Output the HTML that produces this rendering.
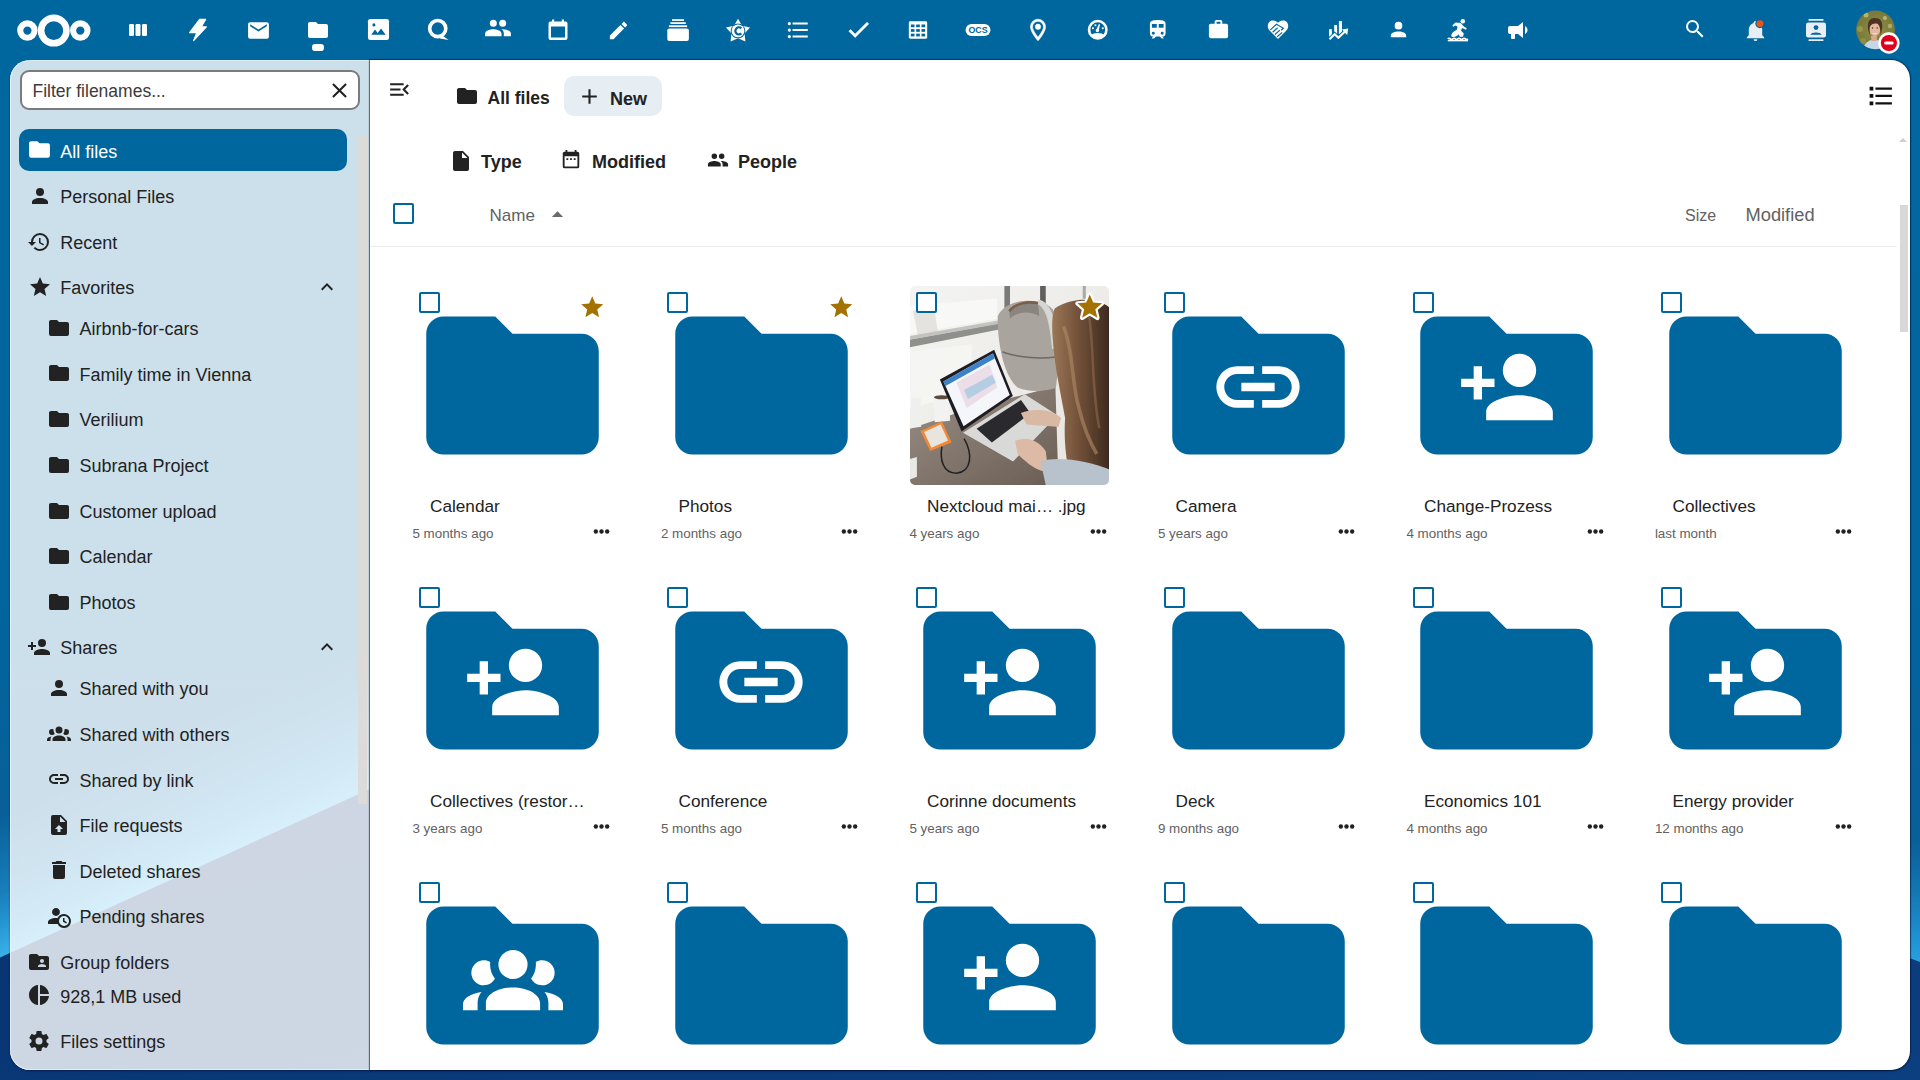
<!DOCTYPE html>
<html><head><meta charset="utf-8"><title>Files - Nextcloud</title>
<style>
html,body{margin:0;padding:0;}
body{width:1920px;height:1080px;overflow:hidden;position:relative;font-family:"Liberation Sans",sans-serif;background:#00679e;}
.t{position:absolute;white-space:nowrap;}
.ic{position:absolute;display:block;overflow:visible;}
.abs{position:absolute;}
</style></head><body>

<svg class="abs" style="left:0;top:0;width:1920px;height:1080px" viewBox="0 0 1920 1080">
<defs>
<linearGradient id="bgG" x1="0" y1="0" x2="0" y2="1">
<stop offset="0" stop-color="#00679e"/><stop offset="0.55" stop-color="#02659e"/><stop offset="0.8" stop-color="#0a5e98"/><stop offset="1" stop-color="#0a5e98"/>
</linearGradient>
<linearGradient id="bandL" gradientUnits="userSpaceOnUse" x1="131" y1="755.5" x2="185" y2="873.8">
<stop offset="0" stop-color="#2aa6e6" stop-opacity="0"/><stop offset="0.55" stop-color="#2aa6e6" stop-opacity="0.45"/><stop offset="1" stop-color="#3ab2ea" stop-opacity="1"/>
</linearGradient>
<linearGradient id="bandR" gradientUnits="userSpaceOnUse" x1="0" y1="840" x2="0" y2="962">
<stop offset="0" stop-color="#1d96d8" stop-opacity="0"/><stop offset="1" stop-color="#2aa4e4" stop-opacity="0.95"/>
</linearGradient>
<linearGradient id="dark" x1="0" y1="0" x2="1" y2="1">
<stop offset="0" stop-color="#06306c"/><stop offset="1" stop-color="#0c3f80"/>
</linearGradient>
</defs>
<rect width="1920" height="1080" fill="url(#bgG)"/>
<path d="M-50,981 L1100,458 L1050,340 L-100,860 Z" fill="url(#bandL)"/>
<path d="M1300,962 L1920,962 L1920,820 L1300,820 Z" fill="url(#bandR)"/>
<path d="M-10,962 L370,789 C700,640 1400,760 1920,962 L1920,1080 L-10,1080 Z" fill="url(#dark)"/>
</svg>

<svg class="abs" style="left:14px;top:10px;width:80px;height:40px" viewBox="14 10 80 40">
<circle cx="27.4" cy="30.6" r="7.2" fill="none" stroke="#fff" stroke-width="6.1"/>
<circle cx="53.8" cy="30.6" r="12.7" fill="none" stroke="#fff" stroke-width="6.6"/>
<circle cx="80.3" cy="30.6" r="7.2" fill="none" stroke="#fff" stroke-width="6.1"/>
</svg>
<svg class="ic" style="left:126.00px;top:18.00px;width:24px;height:24px" viewBox="0 0 24 24"><rect x="3" y="6" width="5" height="12" rx="1.2" fill="#fff"/><rect x="9.5" y="6" width="5" height="12" rx="1.2" fill="#fff"/><rect x="16" y="6" width="5" height="12" rx="1.2" fill="#fff"/></svg>
<svg class="abs" style="left:180px;top:12px;width:36px;height:36px" viewBox="180 12 36 36"><path fill="#fff" stroke="#fff" stroke-width="1.2" stroke-linejoin="round" d="M199.6,19.4 L205.6,19.4 L201.2,26.9 L206.4,26.9 L193.6,40.6 L196.8,32.6 L189.6,32.6 Z"/></svg>
<svg class="ic" style="left:245.50px;top:17.50px;width:25px;height:25px" viewBox="0 0 24 24"><path fill="#ffffff" d="M20,8L12,13L4,8V6L12,11L20,6M20,4H4C2.89,4 2,4.89 2,6V18A2,2 0 0,0 4,20H20A2,2 0 0,0 22,18V6C22,4.89 21.1,4 20,4Z"/></svg>
<svg class="ic" style="left:306.00px;top:17.80px;width:24px;height:24px" viewBox="0 0 24 24"><path fill="#ffffff" d="M10,4H4C2.89,4 2,4.89 2,6V18A2,2 0 0,0 4,20H20A2,2 0 0,0 22,18V8C22,6.89 21.1,6 20,6H12L10,4Z"/></svg>
<div class="abs" style="left:311.8px;top:44.4px;width:12.4px;height:6.2px;border-radius:3.1px;background:#fff"></div>
<svg class="ic" style="left:366.50px;top:18.30px;width:23px;height:23px" viewBox="0 0 24 24"><rect x="1" y="1" width="22" height="22" rx="2.5" fill="#fff"/><path fill="#00679e" d="M4.5,17.5 L8.3,12 L11.2,15.6 L14.6,11 L19.5,17.5 Z"/><circle cx="7.2" cy="7.2" r="1.6" fill="#00679e"/></svg>
<svg class="ic" style="left:426.50px;top:18.30px;width:23px;height:23px" viewBox="0 0 24 24"><circle cx="11.2" cy="11" r="8.4" fill="none" stroke="#fff" stroke-width="3.8"/><path fill="#fff" d="M15,17.5 L22.5,23 L13.5,21.5 Z"/></svg>
<svg class="ic" style="left:484.00px;top:14.00px;width:28px;height:28px" viewBox="0 0 24 24"><path fill="#ffffff" d="M16,13C15.71,13 15.38,13 15.03,13.05C16.19,13.89 17,15 17,16.5V19H23V16.5C23,14.17 18.33,13 16,13M8,13C5.67,13 1,14.17 1,16.5V19H15V16.5C15,14.17 10.33,13 8,13M8,11A3,3 0 0,0 11,8A3,3 0 0,0 8,5A3,3 0 0,0 5,8A3,3 0 0,0 8,11M16,11A3,3 0 0,0 19,8A3,3 0 0,0 16,5A3,3 0 0,0 13,8A3,3 0 0,0 16,11Z"/></svg>
<svg class="ic" style="left:546.00px;top:18.20px;width:24px;height:24px" viewBox="0 0 24 24"><path fill="#fff" d="M6,1.5H8.2V3.5H15.8V1.5H18V3.5H19.5A2,2 0 0,1 21.5,5.5V20A2,2 0 0,1 19.5,22H4.5A2,2 0 0,1 2.5,20V5.5A2,2 0 0,1 4.5,3.5H6Z M5,8.5V19.5H19V8.5Z"/></svg>
<svg class="ic" style="left:606.50px;top:18.50px;width:23px;height:23px" viewBox="0 0 24 24"><path fill="#ffffff" d="M20.71,7.04C21.1,6.65 21.1,6 20.71,5.63L18.37,3.29C18,2.9 17.35,2.9 16.96,3.29L15.12,5.12L18.87,8.87M3,17.25V21H6.75L17.81,9.93L14.06,6.18L3,17.25Z"/></svg>
<svg class="abs" style="left:660px;top:12px;width:40px;height:36px" viewBox="660 12 40 36"><rect x="667.3" y="28.4" width="21.6" height="12.5" rx="2" fill="#fff"/><rect x="668.9" y="25.3" width="18.2" height="1.8" fill="#fff"/><rect x="670.4" y="22.2" width="15.4" height="1.8" fill="#fff"/><rect x="672" y="19.2" width="12" height="1.7" fill="#fff"/></svg>
<svg class="abs" style="left:720px;top:12px;width:36px;height:36px" viewBox="720 12 36 36"><path fill="#fff" d="M738.00,18.70 L742.06,25.72 L749.98,27.41 L744.56,33.43 L745.41,41.49 L738.00,38.20 L730.59,41.49 L731.44,33.43 L726.02,27.41 L733.94,25.72 Z"/><circle cx="738" cy="30.9" r="7.4" fill="#00679e"/><circle cx="738" cy="30.9" r="6.4" fill="#fff"/><path fill="none" stroke="#00679e" stroke-width="2.2" d="M741.3,28.4 A3.5,3.5 0 1,0 741.3,33.4"/></svg>
<svg class="ic" style="left:785.00px;top:17.00px;width:26px;height:26px" viewBox="0 0 24 24"><path fill="#ffffff" d="M7,5H21V7H7V5M7,13V11H21V13H7M4,4.5A1.5,1.5 0 0,1 5.5,6A1.5,1.5 0 0,1 4,7.5A1.5,1.5 0 0,1 2.5,6A1.5,1.5 0 0,1 4,4.5M4,10.5A1.5,1.5 0 0,1 5.5,12A1.5,1.5 0 0,1 4,13.5A1.5,1.5 0 0,1 2.5,12A1.5,1.5 0 0,1 4,10.5M7,19V17H21V19H7M4,16.5A1.5,1.5 0 0,1 5.5,18A1.5,1.5 0 0,1 4,19.5A1.5,1.5 0 0,1 2.5,18A1.5,1.5 0 0,1 4,16.5Z"/></svg>
<svg class="ic" style="left:844.50px;top:15.50px;width:27px;height:27px" viewBox="0 0 24 24"><path fill="#fff" stroke="#fff" stroke-width="0.6" d="M21,7L9,19L3.5,13.5L4.91,12.09L9,16.17L19.59,5.59L21,7Z"/></svg>
<svg class="ic" style="left:907.00px;top:19.40px;width:22px;height:22px" viewBox="0 0 24 24"><rect x="2" y="2.5" width="20" height="19" rx="1.6" fill="#fff"/><g fill="#00679e"><rect x="4.2" y="6" width="4" height="3"/><rect x="10" y="6" width="4" height="3"/><rect x="15.8" y="6" width="4" height="3"/><rect x="4.2" y="11" width="4" height="3"/><rect x="10" y="11" width="4" height="3"/><rect x="15.8" y="11" width="4" height="3"/><rect x="4.2" y="16" width="4" height="3"/><rect x="10" y="16" width="4" height="3"/><rect x="15.8" y="16" width="4" height="3"/></g></svg>
<svg class="ic" style="left:965.00px;top:17.00px;width:26px;height:26px" viewBox="0 0 24 24"><rect x="0.5" y="6.5" width="23" height="11" rx="5.5" fill="#fff"/><text x="12" y="15.2" text-anchor="middle" font-family="Liberation Sans" font-weight="700" font-size="8.2" fill="#00679e">OCS</text></svg>
<svg class="ic" style="left:1025.00px;top:16.80px;width:26px;height:26px" viewBox="0 0 24 24"><path fill="#fff" stroke="#fff" stroke-width="0.5" d="M12,6.5A2.5,2.5 0 0,1 14.5,9A2.5,2.5 0 0,1 12,11.5A2.5,2.5 0 0,1 9.5,9A2.5,2.5 0 0,1 12,6.5M12,2A7,7 0 0,1 19,9C19,14.25 12,22 12,22C12,22 5,14.25 5,9A7,7 0 0,1 12,2M12,4A5,5 0 0,0 7,9C7,10 7,12 12,18.71C17,12 17,10 17,9A5,5 0 0,0 12,4Z"/></svg>
<svg class="ic" style="left:1087.25px;top:18.95px;width:21.5px;height:21.5px" viewBox="0 0 24 24"><circle cx="12" cy="12" r="9.7" fill="none" stroke="#fff" stroke-width="2.9"/><path fill="#fff" d="M4.6,18.2 C7.5,14.8 16.5,14.8 19.4,18.2 A9.7,9.7 0 0,1 4.6,18.2 Z"/><path fill="#fff" d="M10.2,12.3 L13.3,5.6 L14.6,6.1 L12.9,13.2 Z"/><circle cx="11.6" cy="12.9" r="1.9" fill="#fff"/><rect x="5.6" y="9.3" width="2" height="2" fill="#fff"/><rect x="8.4" y="6" width="2" height="2" fill="#fff"/><rect x="16.6" y="9.3" width="2" height="2" fill="#fff"/></svg>
<svg class="ic" style="left:1146.25px;top:17.85px;width:23.5px;height:23.5px" viewBox="0 0 24 24"><path fill="#ffffff" d="M12,2C8,2 4,2.5 4,6V15.5A3.5,3.5 0 0,0 7.5,19L6,20.5V21H8.23L10.23,19H14L16,21H18V20.5L16.5,19A3.5,3.5 0 0,0 20,15.5V6C20,2.5 16.42,2 12,2M7.5,17A1.5,1.5 0 0,1 6,15.5A1.5,1.5 0 0,1 7.5,14A1.5,1.5 0 0,1 9,15.5A1.5,1.5 0 0,1 7.5,17M11,10H6V6H11V10M13,10V6H18V10H13M16.5,17A1.5,1.5 0 0,1 15,15.5A1.5,1.5 0 0,1 16.5,14A1.5,1.5 0 0,1 18,15.5A1.5,1.5 0 0,1 16.5,17Z"/></svg>
<svg class="ic" style="left:1206.50px;top:18.30px;width:23px;height:23px" viewBox="0 0 24 24"><path fill="#ffffff" d="M10,2H14A2,2 0 0,1 16,4V6H20A2,2 0 0,1 22,8V19A2,2 0 0,1 20,21H4C2.89,21 2,20.1 2,19V8C2,6.89 2.89,6 4,6H8V4C8,2.89 8.89,2 10,2M14,6V4H10V6H14Z"/></svg>
<svg class="abs" style="left:1260px;top:12px;width:36px;height:36px" viewBox="1260 12 36 36"><path fill="#fff" d="M1278,39.1 L1269.8,30.8 C1266.5,27.5 1267.3,21.8 1271.8,20.6 C1274.5,19.9 1276.6,21 1278,22.8 C1279.4,21 1281.5,19.9 1284.2,20.6 C1288.7,21.8 1289.5,27.5 1286.2,30.8 Z"/><g fill="none" stroke="#00679e" stroke-width="1.15"><path d="M1270.4,29.8 L1276.4,24.3 L1283.4,28.3 L1281.2,30.2"/><path d="M1272.6,32.2 L1277.6,27.8"/><path d="M1274.9,34.5 L1279.9,30.1"/><path d="M1277.2,36.8 L1282.2,32.4"/></g></svg>
<svg class="abs" style="left:1320px;top:12px;width:36px;height:36px" viewBox="1320 12 36 36"><g fill="#fff"><rect x="1329" y="29.2" width="2.9" height="7.6"/><rect x="1334.2" y="25" width="2.9" height="9"/><rect x="1338.9" y="21.1" width="3.1" height="13"/></g><path fill="none" stroke="#00679e" stroke-width="4" d="M1329.5,39.2 L1334.7,34.3 L1338.4,37.8 L1345.5,31"/><path fill="none" stroke="#fff" stroke-width="2.1" d="M1329.5,39.2 L1334.7,34.3 L1338.4,37.8 L1345.5,31"/><path fill="#fff" d="M1348.2,28.6 L1341.8,29.6 L1347.2,35 Z"/></svg>
<svg class="ic" style="left:1386.50px;top:18.40px;width:23px;height:23px" viewBox="0 0 24 24"><path fill="#ffffff" d="M12,4A4,4 0 0,1 16,8A4,4 0 0,1 12,12A4,4 0 0,1 8,8A4,4 0 0,1 12,4M12,14C16.42,14 20,15.79 20,18V20H4V18C4,15.79 7.58,14 12,14Z"/></svg>
<svg class="abs" style="left:1440px;top:12px;width:36px;height:36px" viewBox="1440 12 36 36"><g fill="#fff"><circle cx="1462.8" cy="21.3" r="2.3"/><path d="M1452.3,25.4 L1455.5,22.4 L1460.8,22.9 L1463.8,26.4 L1466.8,28.2 L1466,29.7 L1462.2,28 L1460.9,30.4 L1463.8,33.4 L1463,36.8 L1459.8,36.8 L1458.6,33.9 L1456.3,31.6 L1457.6,26.8 L1455.4,25.4 L1453.4,26.8 Z"/><ellipse cx="1455.8" cy="33.4" rx="5.2" ry="2.7" transform="rotate(-35 1455.8 33.4)"/></g><path fill="none" stroke="#fff" stroke-width="1.7" d="M1447.8,38.9 q1.25,-1.3 2.5,0 t2.5,0 t2.5,0 t2.5,0 t2.5,0 t2.5,0 t2.5,0 t2.5,0"/><path fill="none" stroke="#fff" stroke-width="1.5" d="M1447.8,40.6 H1468"/></svg>
<svg class="ic" style="left:1506.00px;top:18.20px;width:24px;height:24px" viewBox="0 0 24 24"><path fill="#ffffff" d="M12,8H4A2,2 0 0,0 2,10V14A2,2 0 0,0 4,16H5V20A1,1 0 0,0 6,21H8A1,1 0 0,0 9,20V16H12L17,20V4L12,8M21.5,12C21.5,13.71 20.54,15.26 19,16V8C20.53,8.75 21.5,10.3 21.5,12Z"/></svg>
<svg class="ic" style="left:1683.20px;top:17.40px;width:24px;height:24px" viewBox="0 0 24 24"><path fill="#ffffff" d="M9.5,3A6.5,6.5 0 0,1 16,9.5C16,11.11 15.41,12.59 14.44,13.73L14.71,14H15.5L20.5,19L19,20.5L14,15.5V14.71L13.73,14.44C12.59,15.41 11.11,16 9.5,16A6.5,6.5 0 0,1 3,9.5A6.5,6.5 0 0,1 9.5,3M9.5,5C7,5 5,7 5,9.5C5,12 7,14 9.5,14C12,14 14,12 14,9.5C14,7 12,5 9.5,5Z"/></svg>
<svg class="ic" style="left:1744.00px;top:18.70px;width:23px;height:23px" viewBox="0 0 24 24"><path fill="#e8eef3" d="M21,19V20H3V19L5,17V11C5,7.9 7.03,5.17 10,4.29C10,4.19 10,4.1 10,4A2,2 0 0,1 12,2A2,2 0 0,1 14,4C14,4.1 14,4.19 14,4.29C16.97,5.17 19,7.9 19,11V17L21,19M14,21A2,2 0 0,1 12,23A2,2 0 0,1 10,21"/><circle cx="16.6" cy="4.8" r="4.8" fill="#00679e"/><circle cx="16.6" cy="4.8" r="3.6" fill="#e9541e"/></svg>
<svg class="ic" style="left:1804.00px;top:17.80px;width:24px;height:24px" viewBox="0 0 24 24"><rect x="4.5" y="1" width="15" height="1.8" rx="0.6" fill="#e8eef3"/><rect x="4.5" y="21.2" width="15" height="1.8" rx="0.6" fill="#e8eef3"/><rect x="2" y="4.5" width="20" height="15" rx="2.2" fill="#e8eef3"/><circle cx="12" cy="9.6" r="2.4" fill="#00679e"/><path fill="#00679e" d="M6.5,16.8 C7,13.8 17,13.8 17.5,16.8 Z"/></svg>
<svg class="abs" style="left:1855px;top:9px;width:48px;height:48px" viewBox="0 0 48 48">
<defs><clipPath id="av"><circle cx="20.5" cy="20.8" r="19.4"/></clipPath>
<radialGradient id="avbg" cx="0.45" cy="0.45" r="0.65"><stop offset="0" stop-color="#8f8f45"/><stop offset="0.7" stop-color="#75763a"/><stop offset="1" stop-color="#5a5f2c"/></radialGradient></defs>
<g clip-path="url(#av)">
<rect width="48" height="48" fill="url(#avbg)"/>
<circle cx="11" cy="6" r="2.5" fill="#c8c07c" opacity="0.8"/><circle cx="30" cy="9" r="2" fill="#d6cd8e" opacity="0.7"/><circle cx="35" cy="17" r="2.2" fill="#c9bf74" opacity="0.7"/><circle cx="5" cy="20" r="3" fill="#a2a04e" opacity="0.7"/><circle cx="8" cy="32" r="3" fill="#9b9a48" opacity="0.6"/><circle cx="33" cy="25" r="2" fill="#b8ae60" opacity="0.6"/>
<path d="M7,44 C8,35 13,31 19,30.5 C24,30.5 27,33 28,44 Z" fill="#c5d6e6"/>
<path d="M16,27 L22,27 L21.5,32 L16.5,32 Z" fill="#d8aa8c"/>
<ellipse cx="19.8" cy="19.5" rx="5.9" ry="7.6" fill="#e2b79b"/>
<path d="M13,20 C12,11 16,9 20,9 C25,9 28,12 27.2,19 C26.5,22 26,25 25.5,26 C25.5,21 25,16 22,14.5 C19,14 16,15 14.8,18 C14.5,21 14.8,24 15,26 C14,24 13.3,22 13,20 Z" fill="#4d3322"/>
<path d="M16.8,23.8 Q19.8,26.6 23,23.8 Q19.8,25 16.8,23.8 Z" fill="#fff"/>
<circle cx="17.5" cy="19" r="0.7" fill="#3a2a20"/><circle cx="22.2" cy="19" r="0.7" fill="#3a2a20"/>
</g>
<circle cx="33.9" cy="34" r="10.7" fill="#fff"/>
<circle cx="33.9" cy="34" r="8.1" fill="#e0001b"/>
<rect x="29.1" y="32.4" width="9.6" height="3.2" rx="1.6" fill="#fff"/>
</svg>
<div class="abs" style="left:10px;top:60px;width:360px;height:1010px;border-radius:20px 0 0 20px;background:rgba(255,255,255,0.8);box-shadow:inset 1px 0 0 rgba(255,255,255,0.55),inset 0 -1px 0 rgba(255,255,255,0.55),inset 0 1px 0 rgba(255,255,255,0.35),0 1px 2px rgba(0,10,50,0.55)"></div>
<div class="abs" style="left:358.2px;top:135px;width:9px;height:669px;background:#dcdbda"></div>
<div class="abs" style="left:19.5px;top:70px;width:340.5px;height:40px;box-sizing:border-box;border:2px solid #7b7b7b;border-radius:9px;background:#fff"></div>
<div class="t" style="left:32.50px;top:82.89px;font-size:17.5px;line-height:17.5px;color:#3b3b3b;font-weight:400;letter-spacing:0px;">Filter filenames...</div>
<svg class="ic" style="left:327.00px;top:77.50px;width:25px;height:25px" viewBox="0 0 24 24"><path fill="#222" d="M19,6.41L17.59,5L12,10.59L6.41,5L5,6.41L10.59,12L5,17.59L6.41,19L12,13.41L17.59,19L19,17.59L13.41,12L19,6.41Z"/></svg>
<div class="abs" style="left:19px;top:129.2px;width:328px;height:41.4px;border-radius:10px;background:#00679e"></div>
<svg class="ic" style="left:26.80px;top:137.00px;width:25px;height:25px" viewBox="0 0 24 24"><path fill="#fff" d="M10,4H4C2.89,4 2,4.89 2,6V18A2,2 0 0,0 4,20H20A2,2 0 0,0 22,18V8C22,6.89 21.1,6 20,6H12L10,4Z"/></svg>
<div class="t" style="left:60.30px;top:142.76px;font-size:18px;line-height:18px;color:#fff;font-weight:400;letter-spacing:0px;">All files</div>
<svg class="ic" style="left:27.50px;top:183.50px;width:24px;height:24px" viewBox="0 0 24 24"><path fill="#222222" d="M12,4A4,4 0 0,1 16,8A4,4 0 0,1 12,12A4,4 0 0,1 8,8A4,4 0 0,1 12,4M12,14C16.42,14 20,15.79 20,18V20H4V18C4,15.79 7.58,14 12,14Z"/></svg>
<div class="t" style="left:60.30px;top:187.76px;font-size:18px;line-height:18px;color:#222222;font-weight:400;letter-spacing:0px;">Personal Files</div>
<svg class="ic" style="left:27.30px;top:229.50px;width:24px;height:24px" viewBox="0 0 24 24"><path fill="#222222" d="M13.5,8H12V13L16.28,15.54L17,14.33L13.5,12.25V8M13,3A9,9 0 0,0 4,12H1L4.96,16.03L9,12H6A7,7 0 0,1 13,5A7,7 0 0,1 20,12A7,7 0 0,1 13,19C11.07,19 9.32,18.21 8.06,16.94L6.64,18.36C8.27,20 10.5,21 13,21A9,9 0 0,0 22,12A9,9 0 0,0 13,3"/></svg>
<div class="t" style="left:60.30px;top:233.76px;font-size:18px;line-height:18px;color:#222222;font-weight:400;letter-spacing:0px;">Recent</div>
<svg class="ic" style="left:27.50px;top:275.10px;width:24px;height:24px" viewBox="0 0 24 24"><path fill="#222222" d="M12,17.27L18.18,21L16.54,13.97L22,9.24L14.81,8.62L12,2L9.19,8.62L2,9.24L7.45,13.97L5.82,21L12,17.27Z"/></svg>
<div class="t" style="left:60.30px;top:279.36px;font-size:18px;line-height:18px;color:#222222;font-weight:400;letter-spacing:0px;">Favorites</div>
<svg class="ic" style="left:46.70px;top:316.00px;width:24px;height:24px" viewBox="0 0 24 24"><path fill="#222222" d="M10,4H4C2.89,4 2,4.89 2,6V18A2,2 0 0,0 4,20H20A2,2 0 0,0 22,18V8C22,6.89 21.1,6 20,6H12L10,4Z"/></svg>
<div class="t" style="left:79.50px;top:320.26px;font-size:18px;line-height:18px;color:#222222;font-weight:400;letter-spacing:0px;">Airbnb-for-cars</div>
<svg class="ic" style="left:46.70px;top:361.30px;width:24px;height:24px" viewBox="0 0 24 24"><path fill="#222222" d="M10,4H4C2.89,4 2,4.89 2,6V18A2,2 0 0,0 4,20H20A2,2 0 0,0 22,18V8C22,6.89 21.1,6 20,6H12L10,4Z"/></svg>
<div class="t" style="left:79.50px;top:365.56px;font-size:18px;line-height:18px;color:#222222;font-weight:400;letter-spacing:0px;">Family time in Vienna</div>
<svg class="ic" style="left:46.70px;top:407.00px;width:24px;height:24px" viewBox="0 0 24 24"><path fill="#222222" d="M10,4H4C2.89,4 2,4.89 2,6V18A2,2 0 0,0 4,20H20A2,2 0 0,0 22,18V8C22,6.89 21.1,6 20,6H12L10,4Z"/></svg>
<div class="t" style="left:79.50px;top:411.26px;font-size:18px;line-height:18px;color:#222222;font-weight:400;letter-spacing:0px;">Verilium</div>
<svg class="ic" style="left:46.70px;top:452.80px;width:24px;height:24px" viewBox="0 0 24 24"><path fill="#222222" d="M10,4H4C2.89,4 2,4.89 2,6V18A2,2 0 0,0 4,20H20A2,2 0 0,0 22,18V8C22,6.89 21.1,6 20,6H12L10,4Z"/></svg>
<div class="t" style="left:79.50px;top:457.06px;font-size:18px;line-height:18px;color:#222222;font-weight:400;letter-spacing:0px;">Subrana Project</div>
<svg class="ic" style="left:46.70px;top:498.50px;width:24px;height:24px" viewBox="0 0 24 24"><path fill="#222222" d="M10,4H4C2.89,4 2,4.89 2,6V18A2,2 0 0,0 4,20H20A2,2 0 0,0 22,18V8C22,6.89 21.1,6 20,6H12L10,4Z"/></svg>
<div class="t" style="left:79.50px;top:502.76px;font-size:18px;line-height:18px;color:#222222;font-weight:400;letter-spacing:0px;">Customer upload</div>
<svg class="ic" style="left:46.70px;top:543.80px;width:24px;height:24px" viewBox="0 0 24 24"><path fill="#222222" d="M10,4H4C2.89,4 2,4.89 2,6V18A2,2 0 0,0 4,20H20A2,2 0 0,0 22,18V8C22,6.89 21.1,6 20,6H12L10,4Z"/></svg>
<div class="t" style="left:79.50px;top:548.06px;font-size:18px;line-height:18px;color:#222222;font-weight:400;letter-spacing:0px;">Calendar</div>
<svg class="ic" style="left:46.70px;top:589.50px;width:24px;height:24px" viewBox="0 0 24 24"><path fill="#222222" d="M10,4H4C2.89,4 2,4.89 2,6V18A2,2 0 0,0 4,20H20A2,2 0 0,0 22,18V8C22,6.89 21.1,6 20,6H12L10,4Z"/></svg>
<div class="t" style="left:79.50px;top:593.76px;font-size:18px;line-height:18px;color:#222222;font-weight:400;letter-spacing:0px;">Photos</div>
<svg class="ic" style="left:27.30px;top:634.80px;width:24px;height:24px" viewBox="0 0 24 24"><path fill="#222222" d="M15,14C12.33,14 7,15.33 7,18V20H23V18C23,15.33 17.67,14 15,14M6,10V7H4V10H1V12H4V15H6V12H9V10M15,12A4,4 0 0,0 19,8A4,4 0 0,0 15,4A4,4 0 0,0 11,8A4,4 0 0,0 15,12Z"/></svg>
<div class="t" style="left:60.30px;top:639.06px;font-size:18px;line-height:18px;color:#222222;font-weight:400;letter-spacing:0px;">Shares</div>
<svg class="ic" style="left:46.70px;top:675.70px;width:24px;height:24px" viewBox="0 0 24 24"><path fill="#222222" d="M12,4A4,4 0 0,1 16,8A4,4 0 0,1 12,12A4,4 0 0,1 8,8A4,4 0 0,1 12,4M12,14C16.42,14 20,15.79 20,18V20H4V18C4,15.79 7.58,14 12,14Z"/></svg>
<div class="t" style="left:79.50px;top:679.96px;font-size:18px;line-height:18px;color:#222222;font-weight:400;letter-spacing:0px;">Shared with you</div>
<svg class="ic" style="left:46.70px;top:721.40px;width:24px;height:24px" viewBox="0 0 24 24"><path fill="#222222" d="M12,5.5A3.5,3.5 0 0,1 15.5,9A3.5,3.5 0 0,1 12,12.5A3.5,3.5 0 0,1 8.5,9A3.5,3.5 0 0,1 12,5.5M5,8C5.56,8 6.08,8.15 6.53,8.42C6.38,9.85 6.8,11.27 7.66,12.38C7.16,13.34 6.16,14 5,14A3,3 0 0,1 2,11A3,3 0 0,1 5,8M19,8A3,3 0 0,1 22,11A3,3 0 0,1 19,14C17.84,14 16.84,13.34 16.34,12.38C17.2,11.27 17.62,9.85 17.47,8.42C17.92,8.15 18.44,8 19,8M5.5,18.25C5.5,16.18 8.41,14.5 12,14.5C15.59,14.5 18.5,16.18 18.5,18.25V20H5.5V18.25M0,20V18.5C0,17.11 1.89,15.94 4.45,15.6C3.86,16.28 3.5,17.22 3.5,18.25V20H0M24,20H20.5V18.25C20.5,17.22 20.14,16.28 19.55,15.6C22.11,15.94 24,17.11 24,18.5V20Z"/></svg>
<div class="t" style="left:79.50px;top:725.66px;font-size:18px;line-height:18px;color:#222222;font-weight:400;letter-spacing:0px;">Shared with others</div>
<svg class="ic" style="left:46.70px;top:767.30px;width:24px;height:24px" viewBox="0 0 24 24"><path fill="#222222" d="M3.9,12C3.9,10.29 5.29,8.9 7,8.9H11V7H7A5,5 0 0,0 2,12A5,5 0 0,0 7,17H11V15.1H7C5.29,15.1 3.9,13.71 3.9,12M8,13H16V11H8V13M17,7H13V8.9H17C18.71,8.9 20.1,10.29 20.1,12C20.1,13.71 18.71,15.1 17,15.1H13V17H17A5,5 0 0,0 22,12A5,5 0 0,0 17,7Z"/></svg>
<div class="t" style="left:79.50px;top:771.56px;font-size:18px;line-height:18px;color:#222222;font-weight:400;letter-spacing:0px;">Shared by link</div>
<svg class="ic" style="left:46.70px;top:812.80px;width:24px;height:24px" viewBox="0 0 24 24"><path fill="#222222" d="M14,2H6A2,2 0 0,0 4,4V20A2,2 0 0,0 6,22H18A2,2 0 0,0 20,20V8L14,2M13.5,16V19H10.5V16H8L12,12L16,16H13.5M13,9V3.5L18.5,9H13Z"/></svg>
<div class="t" style="left:79.50px;top:817.06px;font-size:18px;line-height:18px;color:#222222;font-weight:400;letter-spacing:0px;">File requests</div>
<svg class="ic" style="left:46.70px;top:858.30px;width:24px;height:24px" viewBox="0 0 24 24"><path fill="#222222" d="M19,4H15.5L14.5,3H9.5L8.5,4H5V6H19M6,19A2,2 0 0,0 8,21H16A2,2 0 0,0 18,19V7H6V19Z"/></svg>
<div class="t" style="left:79.50px;top:862.56px;font-size:18px;line-height:18px;color:#222222;font-weight:400;letter-spacing:0px;">Deleted shares</div>
<svg class="ic" style="left:46.70px;top:904.20px;width:24px;height:24px" viewBox="0 0 24 24"><path fill="#222222" d="M10.63,14.1C12.23,10.58 16.38,9.03 19.9,10.63C23.42,12.23 24.97,16.38 23.37,19.9C22.24,22.4 19.75,24 17,24C14.3,24 11.83,22.44 10.67,20H1V18C1.06,16.86 1.84,15.93 3.34,15.18C4.84,14.43 6.72,14.04 9,14C9.57,14 10.11,14.05 10.63,14.1V14.1M9,4C10.12,4.03 11.06,4.42 11.81,5.17C12.56,5.92 12.93,6.86 12.93,8C12.93,9.14 12.56,10.08 11.81,10.83C11.06,11.58 10.12,11.95 9,11.95C7.88,11.95 6.94,11.58 6.19,10.83C5.44,10.08 5.07,9.14 5.07,8C5.07,6.86 5.44,5.92 6.19,5.17C6.94,4.42 7.88,4.03 9,4M17,22A5,5 0 0,0 22,17A5,5 0 0,0 17,12A5,5 0 0,0 12,17A5,5 0 0,0 17,22M16,14H17.5V16.82L19.94,18.23L19.19,19.53L16,17.69V14Z"/></svg>
<div class="t" style="left:79.50px;top:908.46px;font-size:18px;line-height:18px;color:#222222;font-weight:400;letter-spacing:0px;">Pending shares</div>
<svg class="ic" style="left:27.30px;top:949.70px;width:24px;height:24px" viewBox="0 0 24 24"><path fill="#222222" d="M19,17H11V16C11,14.67 13.67,14 15,14C16.33,14 19,14.67 19,16M15,9A2,2 0 0,1 17,11A2,2 0 0,1 15,13A2,2 0 0,1 13,11C13,9.89 13.9,9 15,9M20,6H12L10,4H4C2.89,4 2,4.89 2,6V18A2,2 0 0,0 4,20H20A2,2 0 0,0 22,18V8C22,6.89 21.1,6 20,6Z"/></svg>
<div class="t" style="left:60.30px;top:953.96px;font-size:18px;line-height:18px;color:#222222;font-weight:400;letter-spacing:0px;">Group folders</div>
<svg class="ic" style="left:27.30px;top:983.30px;width:24px;height:24px" viewBox="0 0 24 24"><path fill="#222222" d="M11,2V22C5.9,21.5 2,17.2 2,12C2,6.8 5.9,2.5 11,2M13,2V11H22C21.5,6.2 17.8,2.5 13,2M13,13V22C17.7,21.5 21.5,17.8 22,13H13Z"/></svg>
<div class="t" style="left:60.30px;top:987.56px;font-size:18px;line-height:18px;color:#222222;font-weight:400;letter-spacing:0px;">928,1 MB used</div>
<svg class="ic" style="left:27.30px;top:1028.50px;width:24px;height:24px" viewBox="0 0 24 24"><path fill="#222222" d="M12,15.5A3.5,3.5 0 0,1 8.5,12A3.5,3.5 0 0,1 12,8.5A3.5,3.5 0 0,1 15.5,12A3.5,3.5 0 0,1 12,15.5M19.43,12.97C19.47,12.65 19.5,12.33 19.5,12C19.5,11.67 19.47,11.34 19.43,11L21.54,9.37C21.73,9.22 21.78,8.95 21.66,8.73L19.66,5.27C19.54,5.05 19.27,4.96 19.05,5.05L16.56,6.05C16.04,5.66 15.5,5.32 14.87,5.07L14.5,2.42C14.46,2.18 14.25,2 14,2H10C9.75,2 9.54,2.18 9.5,2.42L9.13,5.07C8.5,5.32 7.96,5.66 7.44,6.05L4.95,5.05C4.73,4.96 4.46,5.05 4.34,5.27L2.34,8.73C2.21,8.95 2.27,9.22 2.46,9.37L4.57,11C4.53,11.34 4.5,11.67 4.5,12C4.5,12.33 4.53,12.65 4.57,12.97L2.46,14.63C2.27,14.78 2.21,15.05 2.34,15.27L4.34,18.73C4.46,18.95 4.73,19.03 4.95,18.95L7.44,17.94C7.96,18.34 8.5,18.68 9.13,18.93L9.5,21.58C9.54,21.82 9.75,22 10,22H14C14.25,22 14.46,21.82 14.5,21.58L14.87,18.93C15.5,18.67 16.04,18.34 16.56,17.94L19.05,18.95C19.27,19.03 19.54,18.95 19.66,18.73L21.66,15.27C21.78,15.05 21.73,14.78 21.54,14.63L19.43,12.97Z"/></svg>
<div class="t" style="left:60.30px;top:1032.76px;font-size:18px;line-height:18px;color:#222222;font-weight:400;letter-spacing:0px;">Files settings</div>
<svg class="ic" style="left:314.50px;top:275.40px;width:24px;height:24px" viewBox="0 0 24 24"><path fill="#222222" d="M7.41,15.41L12,10.83L16.59,15.41L18,14L12,8L6,14L7.41,15.41Z"/></svg>
<svg class="ic" style="left:314.50px;top:635.00px;width:24px;height:24px" viewBox="0 0 24 24"><path fill="#222222" d="M7.41,15.41L12,10.83L16.59,15.41L18,14L12,8L6,14L7.41,15.41Z"/></svg>
<div class="abs" style="left:370px;top:60px;width:1540px;height:1010px;border-radius:0 19px 19px 0;background:#fff;box-shadow:0 1px 2px rgba(0,10,50,0.55),0 0 1px 0.6px rgba(0,25,70,0.55)"></div>
<svg class="ic" style="left:386.80px;top:77.40px;width:25px;height:25px" viewBox="0 0 24 24"><path fill="#222" d="M3,6H16V8H3Z M3,11H13V13H3Z M3,16H16V18H3Z M21,15.6L19.6,17L14.6,12L19.6,7L21,8.4L17.4,12Z"/></svg>
<svg class="ic" style="left:454.70px;top:83.90px;width:24px;height:24px" viewBox="0 0 24 24"><path fill="#222" d="M10,4H4C2.89,4 2,4.89 2,6V18A2,2 0 0,0 4,20H20A2,2 0 0,0 22,18V8C22,6.89 21.1,6 20,6H12L10,4Z"/></svg>
<div class="t" style="left:487.50px;top:89.99px;font-size:17.5px;line-height:17.5px;color:#222;font-weight:700;letter-spacing:0px;">All files</div>
<div class="abs" style="left:564.4px;top:75.8px;width:97.6px;height:40.2px;border-radius:10px;background:#e6eef4"></div>
<svg class="ic" style="left:576.50px;top:83.50px;width:25px;height:25px" viewBox="0 0 24 24"><path fill="#222" d="M19,13H13V19H11V13H5V11H11V5H13V11H19V13Z"/></svg>
<div class="t" style="left:610.00px;top:89.56px;font-size:18px;line-height:18px;color:#222;font-weight:700;letter-spacing:0px;">New</div>
<svg class="ic" style="left:1867.55px;top:83.85px;width:25.5px;height:25.5px" viewBox="0 0 24 24"><path fill="#111" d="M1.5,2.5H5V6H1.5Z M1.5,9.5H5V13H1.5Z M1.5,16.5H5V20H1.5Z M7,3.2H22.5V5.4H7Z M7,10.1H22.5V12.3H7Z M7,17.1H22.5V19.3H7Z"/></svg>
<svg class="ic" style="left:448.80px;top:148.80px;width:24px;height:24px" viewBox="0 0 24 24"><path fill="#222" d="M13,9V3.5L18.5,9M6,2C4.89,2 4,2.89 4,4V20A2,2 0 0,0 6,22H18A2,2 0 0,0 20,20V8L14,2H6Z"/></svg>
<div class="t" style="left:481.00px;top:153.16px;font-size:18px;line-height:18px;color:#222;font-weight:700;letter-spacing:0px;">Type</div>
<svg class="ic" style="left:560.00px;top:148.80px;width:22px;height:22px" viewBox="0 0 24 24"><path fill="#222" d="M19,19H5V8H19M16,1V3H8V1H6V3H5C3.89,3 3,3.89 3,5V19A2,2 0 0,0 5,21H19A2,2 0 0,0 21,19V5C21,3.89 20.1,3 19,3H18V1M7,10H9V12H7M11,10H13V12H11M15,10H17V12H15Z"/></svg>
<div class="t" style="left:592.00px;top:153.16px;font-size:18px;line-height:18px;color:#222;font-weight:700;letter-spacing:0px;">Modified</div>
<svg class="ic" style="left:706.50px;top:148.50px;width:22px;height:22px" viewBox="0 0 24 24"><path fill="#222" d="M16,13C15.71,13 15.38,13 15.03,13.05C16.19,13.89 17,15 17,16.5V19H23V16.5C23,14.17 18.33,13 16,13M8,13C5.67,13 1,14.17 1,16.5V19H15V16.5C15,14.17 10.33,13 8,13M8,11A3,3 0 0,0 11,8A3,3 0 0,0 8,5A3,3 0 0,0 5,8A3,3 0 0,0 8,11M16,11A3,3 0 0,0 19,8A3,3 0 0,0 16,5A3,3 0 0,0 13,8A3,3 0 0,0 16,11Z"/></svg>
<div class="t" style="left:738.00px;top:153.16px;font-size:18px;line-height:18px;color:#222;font-weight:700;letter-spacing:0px;">People</div>
<div class="abs" style="left:392.5px;top:203.4px;width:21.5px;height:20.2px;box-sizing:border-box;border:2.5px solid #00679e;border-radius:2px"></div>
<div class="t" style="left:489.50px;top:206.71px;font-size:17px;line-height:17px;color:#626262;font-weight:400;letter-spacing:0px;">Name</div>
<svg class="ic" style="left:544.30px;top:199.70px;width:27px;height:27px" viewBox="0 0 24 24"><path fill="#6b6b6b" d="M7,15L12,10L17,15H7Z"/></svg>
<div class="t" style="left:1685.00px;top:207.56px;font-size:16px;line-height:16px;color:#626262;font-weight:400;letter-spacing:0px;">Size</div>
<div class="t" style="left:1745.50px;top:205.61px;font-size:18.3px;line-height:18.3px;color:#626262;font-weight:400;letter-spacing:0px;">Modified</div>
<div class="abs" style="left:370px;top:245.5px;width:1527px;height:1.2px;background:#ededed"></div>
<div class="abs" style="left:1900px;top:205px;width:8px;height:127px;background:#d8d8d8"></div>
<svg class="abs" style="left:1895px;top:134px;width:16px;height:10px" viewBox="0 0 16 10"><path d="M4,8 L8,4 L12,8 Z" fill="#cfcfcf"/></svg>
<svg class="abs" style="left:409.00px;top:282.00px;width:207px;height:207px" viewBox="0 0 24 24"><path fill="#00679e" d="M10,4H4C2.89,4 2,4.89 2,6V18A2,2 0 0,0 4,20H20A2,2 0 0,0 22,18V8C22,6.89 21.1,6 20,6H12L10,4Z"/></svg>
<div class="abs" style="left:418.80px;top:291.80px;width:21px;height:21px;box-sizing:border-box;border:2.5px solid #00679e;border-radius:2px"></div>
<svg class="ic" style="left:579.05px;top:294.05px;width:26.5px;height:26.5px" viewBox="0 0 24 24"><path fill="#a37200" d="M12,17.27L18.18,21L16.54,13.97L22,9.24L14.81,8.62L12,2L9.19,8.62L2,9.24L7.45,13.97L5.82,21L12,17.27Z"/></svg>
<div class="t" style="left:430.00px;top:498.44px;font-size:17.2px;line-height:17.2px;color:#222222;font-weight:400;letter-spacing:0px;">Calendar</div>
<div class="t" style="left:412.40px;top:527.16px;font-size:13.4px;line-height:13.4px;color:#626262;font-weight:400;letter-spacing:0px;">5 months ago</div>
<svg class="ic" style="left:592.50px;top:523.10px;width:17px;height:17px" viewBox="0 0 24 24"><circle cx="4" cy="12" r="3.1" fill="#222"/><circle cx="12" cy="12" r="3.1" fill="#222"/><circle cx="20" cy="12" r="3.1" fill="#222"/></svg>
<svg class="abs" style="left:657.50px;top:282.00px;width:207px;height:207px" viewBox="0 0 24 24"><path fill="#00679e" d="M10,4H4C2.89,4 2,4.89 2,6V18A2,2 0 0,0 4,20H20A2,2 0 0,0 22,18V8C22,6.89 21.1,6 20,6H12L10,4Z"/></svg>
<div class="abs" style="left:667.30px;top:291.80px;width:21px;height:21px;box-sizing:border-box;border:2.5px solid #00679e;border-radius:2px"></div>
<svg class="ic" style="left:827.55px;top:294.05px;width:26.5px;height:26.5px" viewBox="0 0 24 24"><path fill="#a37200" d="M12,17.27L18.18,21L16.54,13.97L22,9.24L14.81,8.62L12,2L9.19,8.62L2,9.24L7.45,13.97L5.82,21L12,17.27Z"/></svg>
<div class="t" style="left:678.50px;top:498.44px;font-size:17.2px;line-height:17.2px;color:#222222;font-weight:400;letter-spacing:0px;">Photos</div>
<div class="t" style="left:660.90px;top:527.16px;font-size:13.4px;line-height:13.4px;color:#626262;font-weight:400;letter-spacing:0px;">2 months ago</div>
<svg class="ic" style="left:841.00px;top:523.10px;width:17px;height:17px" viewBox="0 0 24 24"><circle cx="4" cy="12" r="3.1" fill="#222"/><circle cx="12" cy="12" r="3.1" fill="#222"/><circle cx="20" cy="12" r="3.1" fill="#222"/></svg>
<svg class="abs" style="left:909.80px;top:285.70px;width:199px;height:199px;border-radius:5px;overflow:hidden" viewBox="0 0 199 199"><defs><filter id="phBlur" x="-5%" y="-5%" width="110%" height="110%"><feGaussianBlur stdDeviation="0.7"/></filter>
<linearGradient id="phWin" x1="0" y1="0" x2="1" y2="1"><stop offset="0" stop-color="#f4f4f2"/><stop offset="1" stop-color="#e6e4e0"/></linearGradient>
<linearGradient id="phTab" x1="0" y1="0" x2="1" y2="1"><stop offset="0" stop-color="#9a8f85"/><stop offset="1" stop-color="#6a5d54"/></linearGradient>
<linearGradient id="phHair" x1="0" y1="0" x2="1" y2="0"><stop offset="0" stop-color="#9a7656"/><stop offset="0.45" stop-color="#74523a"/><stop offset="1" stop-color="#3e2a1e"/></linearGradient>
</defs>
<g filter="url(#phBlur)"><g transform="scale(0.25513) translate(-58,-42)">
<rect x="58" y="42" width="780" height="780" fill="url(#phWin)"/>
<path d="M58,120 L400,90 L400,170 L58,230 Z" fill="#f8f8f6"/>
<path d="M70,140 L150,120 L170,230 L90,240 Z" fill="#d8d6d2" opacity="0.6"/>
<path d="M58,252 L409,188 L412,212 L58,282 Z" fill="#8f8f8c"/>
<path d="M58,238 L409,176 L409,190 L58,253 Z" fill="#c2c2be"/>
<rect x="428" y="42" width="22" height="150" fill="#7a7a78"/>
<rect x="568" y="42" width="22" height="90" fill="#5e5e5c"/>
<rect x="735" y="42" width="12" height="50" fill="#a8a8a6"/>
<path d="M58,300 L300,270 L300,460 L58,520 Z" fill="#f6f6f4" opacity="0.8"/>
<path d="M58,602 L300,520 L628,436 L640,822 L58,822 Z" fill="url(#phTab)"/>
<path d="M62,481 L100,478 L102,594 L62,600 Z" fill="#efefed"/>
<path d="M150,475 L212,470 L215,570 L155,576 Z" fill="#f2f2f0"/>
<ellipse cx="182" cy="478" rx="30" ry="8" fill="#5a4a3e"/>
<path d="M58,720 L85,712 L85,790 L58,800 Z" fill="#e8e8e6"/>
<path d="M402,160 C420,120 470,100 520,100 C580,100 620,120 630,160 C650,250 640,360 630,440 C600,455 520,460 480,440 C430,400 400,280 402,160 Z" fill="#a9a49d"/>
<path d="M447,140 C480,100 540,95 561,120 L565,160 C530,140 480,140 450,170 Z" fill="#8a857e"/>
<path d="M447,141 C470,110 520,100 561,110" fill="none" stroke="#7a5e48" stroke-width="10"/>
<path d="M560,95 C600,100 630,150 640,280 L615,290 C605,180 590,130 560,115 Z" fill="#d6d6d2"/>
<path d="M420,300 C470,320 560,330 630,320" fill="none" stroke="#6e6a64" stroke-width="6"/>
<path d="M175,408 L388,292 L461,473 L260,612 Z" fill="#1f1f22"/>
<path d="M189,416 L383,307 L449,469 L268,592 Z" fill="#f4f6fa"/>
<path d="M189,416 L383,307 L390,326 L197,434 Z" fill="#3c82c8"/>
<path d="M240,420 L370,350 L400,440 L280,520 Z" fill="#e6cad8" opacity="0.55"/>
<path d="M270,450 L380,390 L395,420 L285,485 Z" fill="#9ec6e0" opacity="0.7"/>
<path d="M266,617 L508,466 L636,549 L462,730 Z" fill="#d9d9d7"/>
<path d="M319,602 L493,489 L530,541 L379,655 Z" fill="#2c2c2e"/>
<path d="M625,130 C700,80 800,90 838,125 L838,822 L700,822 C670,760 660,640 666,560 C650,470 630,380 622,300 C615,220 610,170 625,130 Z" fill="url(#phHair)"/>
<path d="M660,200 C700,300 690,420 720,520 C740,600 760,650 790,700" fill="none" stroke="#b08a66" stroke-width="14" opacity="0.6"/>
<path d="M760,160 C780,300 770,450 800,600" fill="none" stroke="#8e6a4c" stroke-width="10" opacity="0.6"/>
<path d="M493,540 C540,520 620,525 650,560 L640,595 C600,590 560,590 515,585 Z" fill="#d9b8a4"/>
<path d="M470,650 C500,630 560,640 590,690 L600,770 C560,770 520,740 480,700 Z" fill="#dcbaa6"/>
<path d="M570,730 C640,705 760,730 838,760 L838,822 L590,822 Z" fill="#b8c2cc"/>
<path d="M99,610 L183,572 L221,655 L137,689 Z" fill="#f08a38"/>
<path d="M113,614 L178,585 L207,648 L142,676 Z" fill="#e8e4de"/>
<path d="M183,672 C175,720 185,775 240,776 C300,770 305,700 270,640" fill="none" stroke="#222" stroke-width="6"/>
</g></g>
</svg>
<div class="abs" style="left:915.90px;top:291.60px;width:21px;height:21px;box-sizing:border-box;border:2.5px solid #00679e;border-radius:2px;background:#fff"></div>
<svg class="ic" style="left:1074.65px;top:292.15px;width:29.5px;height:29.5px" viewBox="0 0 24 24"><path fill="#fff" stroke="#fff" stroke-width="3.6" stroke-linejoin="round" d="M12,17.27L18.18,21L16.54,13.97L22,9.24L14.81,8.62L12,2L9.19,8.62L2,9.24L7.45,13.97L5.82,21L12,17.27Z"/><path fill="#a37200" d="M12,17.27L18.18,21L16.54,13.97L22,9.24L14.81,8.62L12,2L9.19,8.62L2,9.24L7.45,13.97L5.82,21L12,17.27Z"/></svg>
<div class="t" style="left:927.00px;top:498.44px;font-size:17.2px;line-height:17.2px;color:#222222;font-weight:400;letter-spacing:0px;">Nextcloud mai… .jpg</div>
<div class="t" style="left:909.40px;top:527.16px;font-size:13.4px;line-height:13.4px;color:#626262;font-weight:400;letter-spacing:0px;">4 years ago</div>
<svg class="ic" style="left:1089.50px;top:523.10px;width:17px;height:17px" viewBox="0 0 24 24"><circle cx="4" cy="12" r="3.1" fill="#222"/><circle cx="12" cy="12" r="3.1" fill="#222"/><circle cx="20" cy="12" r="3.1" fill="#222"/></svg>
<svg class="abs" style="left:1154.50px;top:282.00px;width:207px;height:207px" viewBox="0 0 24 24"><path fill="#00679e" d="M10,4H4C2.89,4 2,4.89 2,6V18A2,2 0 0,0 4,20H20A2,2 0 0,0 22,18V8C22,6.89 21.1,6 20,6H12L10,4Z"/></svg>
<svg class="abs" style="left:1208.00px;top:336.50px;width:100px;height:100px" viewBox="0 0 24 24"><path fill="#fff" d="M3.9,12C3.9,10.29 5.29,8.9 7,8.9H11V7H7A5,5 0 0,0 2,12A5,5 0 0,0 7,17H11V15.1H7C5.29,15.1 3.9,13.71 3.9,12M8,13H16V11H8V13M17,7H13V8.9H17C18.71,8.9 20.1,10.29 20.1,12C20.1,13.71 18.71,15.1 17,15.1H13V17H17A5,5 0 0,0 22,12A5,5 0 0,0 17,7Z"/></svg>
<div class="abs" style="left:1164.30px;top:291.80px;width:21px;height:21px;box-sizing:border-box;border:2.5px solid #00679e;border-radius:2px"></div>
<div class="t" style="left:1175.50px;top:498.44px;font-size:17.2px;line-height:17.2px;color:#222222;font-weight:400;letter-spacing:0px;">Camera</div>
<div class="t" style="left:1157.90px;top:527.16px;font-size:13.4px;line-height:13.4px;color:#626262;font-weight:400;letter-spacing:0px;">5 years ago</div>
<svg class="ic" style="left:1338.00px;top:523.10px;width:17px;height:17px" viewBox="0 0 24 24"><circle cx="4" cy="12" r="3.1" fill="#222"/><circle cx="12" cy="12" r="3.1" fill="#222"/><circle cx="20" cy="12" r="3.1" fill="#222"/></svg>
<svg class="abs" style="left:1403.00px;top:282.00px;width:207px;height:207px" viewBox="0 0 24 24"><path fill="#00679e" d="M10,4H4C2.89,4 2,4.89 2,6V18A2,2 0 0,0 4,20H20A2,2 0 0,0 22,18V8C22,6.89 21.1,6 20,6H12L10,4Z"/></svg>
<svg class="abs" style="left:1456.50px;top:336.50px;width:100px;height:100px" viewBox="0 0 24 24"><path fill="#fff" d="M15,14C12.33,14 7,15.33 7,18V20H23V18C23,15.33 17.67,14 15,14M6,10V7H4V10H1V12H4V15H6V12H9V10M15,12A4,4 0 0,0 19,8A4,4 0 0,0 15,4A4,4 0 0,0 11,8A4,4 0 0,0 15,12Z"/></svg>
<div class="abs" style="left:1412.80px;top:291.80px;width:21px;height:21px;box-sizing:border-box;border:2.5px solid #00679e;border-radius:2px"></div>
<div class="t" style="left:1424.00px;top:498.44px;font-size:17.2px;line-height:17.2px;color:#222222;font-weight:400;letter-spacing:0px;">Change-Prozess</div>
<div class="t" style="left:1406.40px;top:527.16px;font-size:13.4px;line-height:13.4px;color:#626262;font-weight:400;letter-spacing:0px;">4 months ago</div>
<svg class="ic" style="left:1586.50px;top:523.10px;width:17px;height:17px" viewBox="0 0 24 24"><circle cx="4" cy="12" r="3.1" fill="#222"/><circle cx="12" cy="12" r="3.1" fill="#222"/><circle cx="20" cy="12" r="3.1" fill="#222"/></svg>
<svg class="abs" style="left:1651.50px;top:282.00px;width:207px;height:207px" viewBox="0 0 24 24"><path fill="#00679e" d="M10,4H4C2.89,4 2,4.89 2,6V18A2,2 0 0,0 4,20H20A2,2 0 0,0 22,18V8C22,6.89 21.1,6 20,6H12L10,4Z"/></svg>
<div class="abs" style="left:1661.30px;top:291.80px;width:21px;height:21px;box-sizing:border-box;border:2.5px solid #00679e;border-radius:2px"></div>
<div class="t" style="left:1672.50px;top:498.44px;font-size:17.2px;line-height:17.2px;color:#222222;font-weight:400;letter-spacing:0px;">Collectives</div>
<div class="t" style="left:1654.90px;top:527.16px;font-size:13.4px;line-height:13.4px;color:#626262;font-weight:400;letter-spacing:0px;">last month</div>
<svg class="ic" style="left:1835.00px;top:523.10px;width:17px;height:17px" viewBox="0 0 24 24"><circle cx="4" cy="12" r="3.1" fill="#222"/><circle cx="12" cy="12" r="3.1" fill="#222"/><circle cx="20" cy="12" r="3.1" fill="#222"/></svg>
<svg class="abs" style="left:409.00px;top:577.00px;width:207px;height:207px" viewBox="0 0 24 24"><path fill="#00679e" d="M10,4H4C2.89,4 2,4.89 2,6V18A2,2 0 0,0 4,20H20A2,2 0 0,0 22,18V8C22,6.89 21.1,6 20,6H12L10,4Z"/></svg>
<svg class="abs" style="left:462.50px;top:631.50px;width:100px;height:100px" viewBox="0 0 24 24"><path fill="#fff" d="M15,14C12.33,14 7,15.33 7,18V20H23V18C23,15.33 17.67,14 15,14M6,10V7H4V10H1V12H4V15H6V12H9V10M15,12A4,4 0 0,0 19,8A4,4 0 0,0 15,4A4,4 0 0,0 11,8A4,4 0 0,0 15,12Z"/></svg>
<div class="abs" style="left:418.80px;top:586.80px;width:21px;height:21px;box-sizing:border-box;border:2.5px solid #00679e;border-radius:2px"></div>
<div class="t" style="left:430.00px;top:793.44px;font-size:17.2px;line-height:17.2px;color:#222222;font-weight:400;letter-spacing:0px;">Collectives (restor…</div>
<div class="t" style="left:412.40px;top:822.16px;font-size:13.4px;line-height:13.4px;color:#626262;font-weight:400;letter-spacing:0px;">3 years ago</div>
<svg class="ic" style="left:592.50px;top:818.10px;width:17px;height:17px" viewBox="0 0 24 24"><circle cx="4" cy="12" r="3.1" fill="#222"/><circle cx="12" cy="12" r="3.1" fill="#222"/><circle cx="20" cy="12" r="3.1" fill="#222"/></svg>
<svg class="abs" style="left:657.50px;top:577.00px;width:207px;height:207px" viewBox="0 0 24 24"><path fill="#00679e" d="M10,4H4C2.89,4 2,4.89 2,6V18A2,2 0 0,0 4,20H20A2,2 0 0,0 22,18V8C22,6.89 21.1,6 20,6H12L10,4Z"/></svg>
<svg class="abs" style="left:711.00px;top:631.50px;width:100px;height:100px" viewBox="0 0 24 24"><path fill="#fff" d="M3.9,12C3.9,10.29 5.29,8.9 7,8.9H11V7H7A5,5 0 0,0 2,12A5,5 0 0,0 7,17H11V15.1H7C5.29,15.1 3.9,13.71 3.9,12M8,13H16V11H8V13M17,7H13V8.9H17C18.71,8.9 20.1,10.29 20.1,12C20.1,13.71 18.71,15.1 17,15.1H13V17H17A5,5 0 0,0 22,12A5,5 0 0,0 17,7Z"/></svg>
<div class="abs" style="left:667.30px;top:586.80px;width:21px;height:21px;box-sizing:border-box;border:2.5px solid #00679e;border-radius:2px"></div>
<div class="t" style="left:678.50px;top:793.44px;font-size:17.2px;line-height:17.2px;color:#222222;font-weight:400;letter-spacing:0px;">Conference</div>
<div class="t" style="left:660.90px;top:822.16px;font-size:13.4px;line-height:13.4px;color:#626262;font-weight:400;letter-spacing:0px;">5 months ago</div>
<svg class="ic" style="left:841.00px;top:818.10px;width:17px;height:17px" viewBox="0 0 24 24"><circle cx="4" cy="12" r="3.1" fill="#222"/><circle cx="12" cy="12" r="3.1" fill="#222"/><circle cx="20" cy="12" r="3.1" fill="#222"/></svg>
<svg class="abs" style="left:906.00px;top:577.00px;width:207px;height:207px" viewBox="0 0 24 24"><path fill="#00679e" d="M10,4H4C2.89,4 2,4.89 2,6V18A2,2 0 0,0 4,20H20A2,2 0 0,0 22,18V8C22,6.89 21.1,6 20,6H12L10,4Z"/></svg>
<svg class="abs" style="left:959.50px;top:631.50px;width:100px;height:100px" viewBox="0 0 24 24"><path fill="#fff" d="M15,14C12.33,14 7,15.33 7,18V20H23V18C23,15.33 17.67,14 15,14M6,10V7H4V10H1V12H4V15H6V12H9V10M15,12A4,4 0 0,0 19,8A4,4 0 0,0 15,4A4,4 0 0,0 11,8A4,4 0 0,0 15,12Z"/></svg>
<div class="abs" style="left:915.80px;top:586.80px;width:21px;height:21px;box-sizing:border-box;border:2.5px solid #00679e;border-radius:2px"></div>
<div class="t" style="left:927.00px;top:793.44px;font-size:17.2px;line-height:17.2px;color:#222222;font-weight:400;letter-spacing:0px;">Corinne documents</div>
<div class="t" style="left:909.40px;top:822.16px;font-size:13.4px;line-height:13.4px;color:#626262;font-weight:400;letter-spacing:0px;">5 years ago</div>
<svg class="ic" style="left:1089.50px;top:818.10px;width:17px;height:17px" viewBox="0 0 24 24"><circle cx="4" cy="12" r="3.1" fill="#222"/><circle cx="12" cy="12" r="3.1" fill="#222"/><circle cx="20" cy="12" r="3.1" fill="#222"/></svg>
<svg class="abs" style="left:1154.50px;top:577.00px;width:207px;height:207px" viewBox="0 0 24 24"><path fill="#00679e" d="M10,4H4C2.89,4 2,4.89 2,6V18A2,2 0 0,0 4,20H20A2,2 0 0,0 22,18V8C22,6.89 21.1,6 20,6H12L10,4Z"/></svg>
<div class="abs" style="left:1164.30px;top:586.80px;width:21px;height:21px;box-sizing:border-box;border:2.5px solid #00679e;border-radius:2px"></div>
<div class="t" style="left:1175.50px;top:793.44px;font-size:17.2px;line-height:17.2px;color:#222222;font-weight:400;letter-spacing:0px;">Deck</div>
<div class="t" style="left:1157.90px;top:822.16px;font-size:13.4px;line-height:13.4px;color:#626262;font-weight:400;letter-spacing:0px;">9 months ago</div>
<svg class="ic" style="left:1338.00px;top:818.10px;width:17px;height:17px" viewBox="0 0 24 24"><circle cx="4" cy="12" r="3.1" fill="#222"/><circle cx="12" cy="12" r="3.1" fill="#222"/><circle cx="20" cy="12" r="3.1" fill="#222"/></svg>
<svg class="abs" style="left:1403.00px;top:577.00px;width:207px;height:207px" viewBox="0 0 24 24"><path fill="#00679e" d="M10,4H4C2.89,4 2,4.89 2,6V18A2,2 0 0,0 4,20H20A2,2 0 0,0 22,18V8C22,6.89 21.1,6 20,6H12L10,4Z"/></svg>
<div class="abs" style="left:1412.80px;top:586.80px;width:21px;height:21px;box-sizing:border-box;border:2.5px solid #00679e;border-radius:2px"></div>
<div class="t" style="left:1424.00px;top:793.44px;font-size:17.2px;line-height:17.2px;color:#222222;font-weight:400;letter-spacing:0px;">Economics 101</div>
<div class="t" style="left:1406.40px;top:822.16px;font-size:13.4px;line-height:13.4px;color:#626262;font-weight:400;letter-spacing:0px;">4 months ago</div>
<svg class="ic" style="left:1586.50px;top:818.10px;width:17px;height:17px" viewBox="0 0 24 24"><circle cx="4" cy="12" r="3.1" fill="#222"/><circle cx="12" cy="12" r="3.1" fill="#222"/><circle cx="20" cy="12" r="3.1" fill="#222"/></svg>
<svg class="abs" style="left:1651.50px;top:577.00px;width:207px;height:207px" viewBox="0 0 24 24"><path fill="#00679e" d="M10,4H4C2.89,4 2,4.89 2,6V18A2,2 0 0,0 4,20H20A2,2 0 0,0 22,18V8C22,6.89 21.1,6 20,6H12L10,4Z"/></svg>
<svg class="abs" style="left:1705.00px;top:631.50px;width:100px;height:100px" viewBox="0 0 24 24"><path fill="#fff" d="M15,14C12.33,14 7,15.33 7,18V20H23V18C23,15.33 17.67,14 15,14M6,10V7H4V10H1V12H4V15H6V12H9V10M15,12A4,4 0 0,0 19,8A4,4 0 0,0 15,4A4,4 0 0,0 11,8A4,4 0 0,0 15,12Z"/></svg>
<div class="abs" style="left:1661.30px;top:586.80px;width:21px;height:21px;box-sizing:border-box;border:2.5px solid #00679e;border-radius:2px"></div>
<div class="t" style="left:1672.50px;top:793.44px;font-size:17.2px;line-height:17.2px;color:#222222;font-weight:400;letter-spacing:0px;">Energy provider</div>
<div class="t" style="left:1654.90px;top:822.16px;font-size:13.4px;line-height:13.4px;color:#626262;font-weight:400;letter-spacing:0px;">12 months ago</div>
<svg class="ic" style="left:1835.00px;top:818.10px;width:17px;height:17px" viewBox="0 0 24 24"><circle cx="4" cy="12" r="3.1" fill="#222"/><circle cx="12" cy="12" r="3.1" fill="#222"/><circle cx="20" cy="12" r="3.1" fill="#222"/></svg>
<svg class="abs" style="left:409.00px;top:872.00px;width:207px;height:207px" viewBox="0 0 24 24"><path fill="#00679e" d="M10,4H4C2.89,4 2,4.89 2,6V18A2,2 0 0,0 4,20H20A2,2 0 0,0 22,18V8C22,6.89 21.1,6 20,6H12L10,4Z"/></svg>
<svg class="abs" style="left:462.50px;top:926.50px;width:100px;height:100px" viewBox="0 0 24 24"><path fill="#fff" d="M12,5.5A3.5,3.5 0 0,1 15.5,9A3.5,3.5 0 0,1 12,12.5A3.5,3.5 0 0,1 8.5,9A3.5,3.5 0 0,1 12,5.5M5,8C5.56,8 6.08,8.15 6.53,8.42C6.38,9.85 6.8,11.27 7.66,12.38C7.16,13.34 6.16,14 5,14A3,3 0 0,1 2,11A3,3 0 0,1 5,8M19,8A3,3 0 0,1 22,11A3,3 0 0,1 19,14C17.84,14 16.84,13.34 16.34,12.38C17.2,11.27 17.62,9.85 17.47,8.42C17.92,8.15 18.44,8 19,8M5.5,18.25C5.5,16.18 8.41,14.5 12,14.5C15.59,14.5 18.5,16.18 18.5,18.25V20H5.5V18.25M0,20V18.5C0,17.11 1.89,15.94 4.45,15.6C3.86,16.28 3.5,17.22 3.5,18.25V20H0M24,20H20.5V18.25C20.5,17.22 20.14,16.28 19.55,15.6C22.11,15.94 24,17.11 24,18.5V20Z"/></svg>
<div class="abs" style="left:418.80px;top:881.80px;width:21px;height:21px;box-sizing:border-box;border:2.5px solid #00679e;border-radius:2px"></div>
<svg class="abs" style="left:657.50px;top:872.00px;width:207px;height:207px" viewBox="0 0 24 24"><path fill="#00679e" d="M10,4H4C2.89,4 2,4.89 2,6V18A2,2 0 0,0 4,20H20A2,2 0 0,0 22,18V8C22,6.89 21.1,6 20,6H12L10,4Z"/></svg>
<div class="abs" style="left:667.30px;top:881.80px;width:21px;height:21px;box-sizing:border-box;border:2.5px solid #00679e;border-radius:2px"></div>
<svg class="abs" style="left:906.00px;top:872.00px;width:207px;height:207px" viewBox="0 0 24 24"><path fill="#00679e" d="M10,4H4C2.89,4 2,4.89 2,6V18A2,2 0 0,0 4,20H20A2,2 0 0,0 22,18V8C22,6.89 21.1,6 20,6H12L10,4Z"/></svg>
<svg class="abs" style="left:959.50px;top:926.50px;width:100px;height:100px" viewBox="0 0 24 24"><path fill="#fff" d="M15,14C12.33,14 7,15.33 7,18V20H23V18C23,15.33 17.67,14 15,14M6,10V7H4V10H1V12H4V15H6V12H9V10M15,12A4,4 0 0,0 19,8A4,4 0 0,0 15,4A4,4 0 0,0 11,8A4,4 0 0,0 15,12Z"/></svg>
<div class="abs" style="left:915.80px;top:881.80px;width:21px;height:21px;box-sizing:border-box;border:2.5px solid #00679e;border-radius:2px"></div>
<svg class="abs" style="left:1154.50px;top:872.00px;width:207px;height:207px" viewBox="0 0 24 24"><path fill="#00679e" d="M10,4H4C2.89,4 2,4.89 2,6V18A2,2 0 0,0 4,20H20A2,2 0 0,0 22,18V8C22,6.89 21.1,6 20,6H12L10,4Z"/></svg>
<div class="abs" style="left:1164.30px;top:881.80px;width:21px;height:21px;box-sizing:border-box;border:2.5px solid #00679e;border-radius:2px"></div>
<svg class="abs" style="left:1403.00px;top:872.00px;width:207px;height:207px" viewBox="0 0 24 24"><path fill="#00679e" d="M10,4H4C2.89,4 2,4.89 2,6V18A2,2 0 0,0 4,20H20A2,2 0 0,0 22,18V8C22,6.89 21.1,6 20,6H12L10,4Z"/></svg>
<div class="abs" style="left:1412.80px;top:881.80px;width:21px;height:21px;box-sizing:border-box;border:2.5px solid #00679e;border-radius:2px"></div>
<svg class="abs" style="left:1651.50px;top:872.00px;width:207px;height:207px" viewBox="0 0 24 24"><path fill="#00679e" d="M10,4H4C2.89,4 2,4.89 2,6V18A2,2 0 0,0 4,20H20A2,2 0 0,0 22,18V8C22,6.89 21.1,6 20,6H12L10,4Z"/></svg>
<div class="abs" style="left:1661.30px;top:881.80px;width:21px;height:21px;box-sizing:border-box;border:2.5px solid #00679e;border-radius:2px"></div>
</body></html>
